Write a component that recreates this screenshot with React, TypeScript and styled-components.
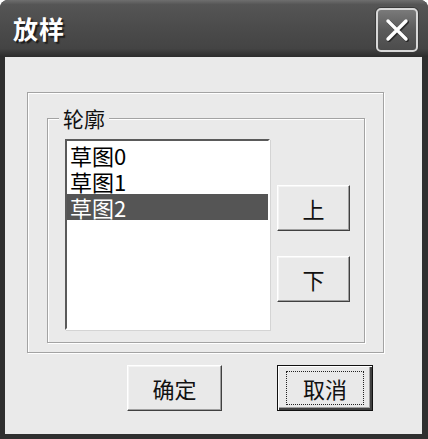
import styled, { createGlobalStyle } from "styled-components";

const GlobalStyle = createGlobalStyle`
  html, body {
    margin: 0;
    padding: 0;
    background: #ffffff;
  }
  body {
    font-family: "Noto Sans CJK SC", "DejaVu Sans", sans-serif;
  }
`;

const items = ["草图0", "草图1", "草图2"];

const App = () => {
  return (
    <>
      <GlobalStyle />
      <Window>
        <TitleBar>
          <Title>放样</Title>
          <CloseButton aria-label="close">
            <svg width="26" height="26" viewBox="0 0 26 26">
              <path
                d="M4 4 L22 22 M22 4 L4 22"
                stroke="#2a2a2a"
                strokeWidth="4"
                strokeLinecap="round"
                transform="translate(1 1)"
              />
              <path
                d="M4 4 L22 22 M22 4 L4 22"
                stroke="#ffffff"
                strokeWidth="3.4"
                strokeLinecap="round"
              />
            </svg>
          </CloseButton>
        </TitleBar>
        <Client>
          <OuterFrame>
            <GroupBox>
              <Legend>轮廓</Legend>
              <ListBox>
                {items.map((item, i) => (
                  <ListItem key={item} selected={i === 2}>
                    {item}
                  </ListItem>
                ))}
              </ListBox>
              <SideButtons>
                <Button>上</Button>
                <Button>下</Button>
              </SideButtons>
            </GroupBox>
          </OuterFrame>
          <ButtonRow>
            <Button>确定</Button>
            <DefaultButton>
              <FocusRect>取消</FocusRect>
            </DefaultButton>
          </ButtonRow>
        </Client>
      </Window>
    </>
  );
};

const Window = styled.div`
  width: 428px;
  height: 439px;
  box-sizing: border-box;
  display: flex;
  flex-direction: column;
  background: #2f2f2f;
  border-radius: 8px 8px 0 0;
  overflow: hidden;
`;

const TitleBar = styled.div`
  height: 57px;
  flex: none;
  display: flex;
  align-items: center;
  justify-content: space-between;
  padding: 0 10px 0 13px;
  background: linear-gradient(
    #6e6e6e 0,
    #555555 8%,
    #4b4b4b 50%,
    #444444 85%,
    #2c2c2c 100%
  );
`;

const Title = styled.span`
  color: #ffffff;
  font-size: 25px;
  font-weight: 700;
  letter-spacing: 1px;
  text-shadow: 2px 2px 1px #1e1e1e;
  margin-top: -2px;
`;

const CloseButton = styled.div`
  width: 38px;
  height: 40px;
  margin-top: 2px;
  display: flex;
  align-items: center;
  justify-content: center;
  border: 2px solid #d8d8d8;
  border-radius: 5px;
  background: linear-gradient(#7a7a7a, #5a5a5a 50%, #4c4c4c);
  box-shadow: 0 0 0 1px #3a3a3a;
`;

const Client = styled.div`
  flex: 1;
  margin: 0 6px 5px 5px;
  background: #eaeaea;
  padding: 35px 38px 0 22px;
  display: flex;
  flex-direction: column;
`;

const OuterFrame = styled.div`
  height: 261px;
  box-sizing: border-box;
  border: 1px solid #a3a3a3;
  box-shadow: inset 1px 1px 0 #ffffff, 1px 1px 0 #ffffff;
  padding: 25px 18px 9px 19px;
  display: flex;
`;

const GroupBox = styled.div`
  position: relative;
  flex: 1;
  border: 1px solid #a3a3a3;
  box-shadow: inset 1px 1px 0 #ffffff, 1px 1px 0 #ffffff;
  padding: 20px 14px 12px 17px;
  display: flex;
  gap: 7px;
`;

const Legend = styled.span`
  position: absolute;
  top: -15px;
  left: 11px;
  padding: 0 4px;
  background: #eaeaea;
  color: #111111;
  font-size: 21px;
  line-height: 28px;
`;

const ListBox = styled.div`
  width: 205px;
  box-sizing: border-box;
  background: #ffffff;
  border-style: solid;
  border-width: 2px;
  border-color: #5a5a5a #ffffff #ffffff #5a5a5a;
  box-shadow: 1px 1px 0 #d4d4d4;
  padding-top: 1px;
  display: flex;
  flex-direction: column;
`;

const ListItem = styled.div<{ selected?: boolean }>`
  height: 26px;
  line-height: 26px;
  font-size: 22px;
  padding-left: 3px;
  color: ${(p) => (p.selected ? "#ffffff" : "#000000")};
  background: ${(p) => (p.selected ? "#555555" : "transparent")};
`;

const SideButtons = styled.div`
  display: flex;
  flex-direction: column;
  gap: 25px;
  padding-top: 46px;
`;

const Button = styled.div`
  width: 73px;
  height: 46px;
  box-sizing: border-box;
  display: flex;
  align-items: center;
  justify-content: center;
  background: #e9e9e9;
  color: #111111;
  font-size: 22px;
  border-style: solid;
  border-width: 1px;
  border-color: #ffffff #404040 #404040 #ffffff;
  box-shadow: inset -1px -1px 0 #a0a0a0, inset 1px 1px 0 #f4f4f4;
`;

const DefaultButton = styled(Button)`
  border: 1px solid #111111;
  box-shadow: inset 1px 1px 0 #ffffff, inset -2px -2px 0 #404040,
    inset -3px -3px 0 #a0a0a0;
  width: 96px;
`;

const FocusRect = styled.span`
  width: 78px;
  height: 34px;
  display: flex;
  align-items: center;
  justify-content: center;
  border: 1px dotted #222222;
  box-sizing: border-box;
`;

const ButtonRow = styled.div`
  display: flex;
  gap: 55px;
  padding: 12px 0 0 100px;

  & > div:first-child {
    width: 95px;
  }
`;

export default App;
